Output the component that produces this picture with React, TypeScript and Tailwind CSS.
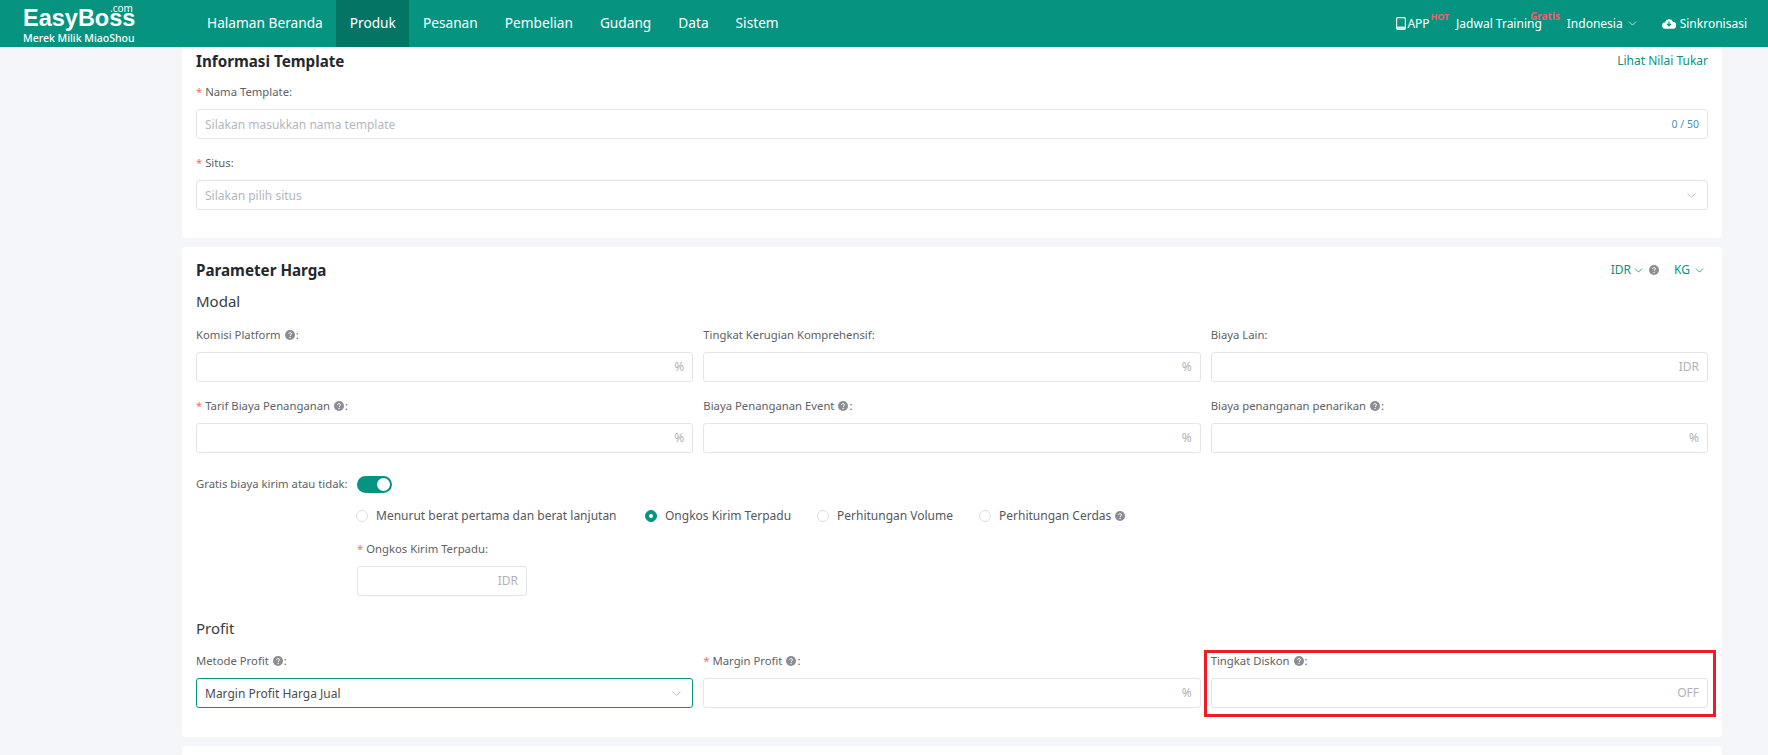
import { ChevronDown } from 'lucide-react'

const font = "font-['Noto_Sans',sans-serif]"

const nav = ['Halaman Beranda', 'Produk', 'Pesanan', 'Pembelian', 'Gudang', 'Data', 'Sistem']

function Help() {
  return (
    <svg viewBox="0 0 12 12" className="inline-block w-[10px] h-[10px] ml-[4px] mr-[1px] align-[-1px]">
      <circle cx="6" cy="6" r="6" fill="#8a8d93" />
      <path d="M4.3 4.7c0-1 .8-1.6 1.8-1.6s1.7.6 1.7 1.5c0 1.3-1.7 1.3-1.7 2.6" fill="none" stroke="#fff" strokeWidth="1.2" />
      <circle cx="6.1" cy="9" r=".8" fill="#fff" />
    </svg>
  )
}

function CloudIcon() {
  return (
    <svg viewBox="0 0 16 12" className="w-[14px] h-[11px] mr-[4px]">
      <path d="M4 12a3.6 3.6 0 0 1-.6-7.2A4.8 4.8 0 0 1 12.4 4 4 4 0 0 1 12.2 12z" fill="#fff" />
      <path d="M8 3.6v4.6M5.8 6.4 8 8.6l2.2-2.2" fill="none" stroke="#06937f" strokeWidth="1.4" />
    </svg>
  )
}

function PhoneIcon() {
  return (
    <svg viewBox="0 0 10 13" className="w-[10px] h-[13px] mr-[1px]">
      <rect x=".6" y=".6" width="8.8" height="11.8" rx="1.4" fill="none" stroke="#fff" strokeWidth="1.1" />
      <path d="M.6 9.6h8.8v1.6a1.2 1.2 0 0 1-1.2 1.2H1.8a1.2 1.2 0 0 1-1.2-1.2z" fill="#cfeee8" />
    </svg>
  )
}

function Label({ text, required, help }: { text: string; required?: boolean; help?: boolean }) {
  return (
    <div className="h-[18px] leading-[18px] text-[11.3px] text-[#606266] whitespace-nowrap">
      {required && <span className="text-[#f56c6c]">* </span>}
      {text}
      {help && <Help />}:
    </div>
  )
}

function Input({ placeholder, suffix, value, focused, chevron, className }: {
  placeholder?: string
  suffix?: string
  value?: string
  focused?: boolean
  chevron?: boolean
  className?: string
}) {
  return (
    <div
      className={`h-[30px] bg-white rounded-[3px] border flex items-center justify-between pl-[8px] pr-[8px] text-[12px] ${
        focused ? 'border-[#06937f]' : 'border-[#e3e5ea]'
      } ${className ?? ''}`}
    >
      <span className={`pt-[1px] ${value ? 'text-[#4a4d52]' : 'text-[#b4b7bd]'}`}>{value ?? placeholder}</span>
      {suffix && <span className={suffix === '0 / 50' ? 'pt-[1px] text-[10.5px] text-[#4a8fb5]' : 'text-[#b0b3b9]'}>{suffix}</span>}
      {chevron && <ChevronDown size={15} strokeWidth={1.3} className="text-[#a9acb2]" />}
    </div>
  )
}

function Field({ text, required, help, ...rest }: {
  text: string
  required?: boolean
  help?: boolean
  placeholder?: string
  suffix?: string
  value?: string
  focused?: boolean
  chevron?: boolean
}) {
  return (
    <div>
      <Label text={text} required={required} help={help} />
      <Input className="mt-[8px]" {...rest} />
    </div>
  )
}

function Radio({ text, on, help, className }: { text: string; on?: boolean; help?: boolean; className: string }) {
  return (
    <div className={`flex items-center text-[12px] text-[#55585e] whitespace-nowrap ${className}`}>
      <span
        className={`w-[12px] h-[12px] rounded-full mr-[8px] flex items-center justify-center border ${
          on ? 'bg-[#06937f] border-[#06937f]' : 'bg-white border-[#dcdfe6]'
        }`}
      >
        {on && <span className="w-[4px] h-[4px] rounded-full bg-white" />}
      </span>
      {text}
      {help && <Help />}
    </div>
  )
}

export default function App() {
  return (
    <div className={`${font} relative h-[755px] overflow-hidden bg-[#f5f6fa]`}>
      <header className="h-[47px] bg-[#06937f] flex items-stretch text-white">
        <div className="w-[193.5px] pl-[23px] relative shrink-0">
          <div className="font-['Liberation_Sans',sans-serif] font-bold text-[23.5px] leading-[25px] pt-[6px]">EasyBoss</div>
          <span className="absolute left-[110px] top-[2px] text-[10px] leading-[12px]">.com</span>
          <div className="text-[10.5px] leading-[12px] mt-[1px] font-medium">Merek Milik MiaoShou</div>
        </div>
        <nav className="flex text-[13.7px]">
          {nav.map((n) => (
            <div key={n} className={`px-[13.5px] flex items-center ${n === 'Produk' ? 'bg-[#047565]' : ''}`}>
              {n}
            </div>
          ))}
        </nav>
        <div className="ml-auto flex items-center text-[12px] pr-[21px]">
          <div className="relative flex items-center mr-[26.5px]">
            <PhoneIcon />
            APP
            <span className="absolute left-[34px] -top-[5px] text-[9px] font-bold text-[#e8626a]">HOT</span>
          </div>
          <div className="relative mr-[25px]">
            Jadwal Training
            <span className="absolute left-[74px] -top-[6px] text-[10px] font-bold text-[#e8626a]">Gratis</span>
          </div>
          <div className="flex items-center mr-[23px]">
            Indonesia
            <ChevronDown size={13} strokeWidth={1.3} className="ml-[3px]" />
          </div>
          <div className="flex items-center">
            <CloudIcon />
            Sinkronisasi
          </div>
        </div>
      </header>

      <main className="pl-[182px] w-[1722px]">
        <section className="bg-white px-[14px] pt-[5px] pb-[28px] rounded-b-[4px]">
          <div className="flex justify-between items-center h-[18px]">
            <h2 className="text-[15.2px] font-bold text-[#25282d]">Informasi Template</h2>
            <a className="text-[12px] text-[#06937f]">Lihat Nilai Tukar</a>
          </div>
          <div className="mt-[13px]">
            <Field text="Nama Template" required placeholder="Silakan masukkan nama template" suffix="0 / 50" />
          </div>
          <div className="mt-[15px]">
            <Field text="Situs" required placeholder="Silakan pilih situs" chevron />
          </div>
        </section>

        <section className="mt-[9px] bg-white px-[14px] pt-[14px] pb-[29px] rounded-[4px]">
          <div className="flex justify-between items-center h-[18px]">
            <h2 className="text-[15.2px] font-bold text-[#25282d]">Parameter Harga</h2>
            <div className="flex items-center text-[12px] text-[#06937f] pr-[2px]">
              IDR
              <ChevronDown size={13} strokeWidth={1.5} className="ml-[1px]" />
              <Help />
              <span className="ml-[14px]">KG</span>
              <ChevronDown size={13} strokeWidth={1.5} className="ml-[3px]" />
            </div>
          </div>
          <h3 className="mt-[10px] h-[24px] leading-[24px] text-[15px] text-[#3a3d42]">Modal</h3>
          <div className="mt-[13px] grid grid-cols-3 gap-x-[10px] gap-y-[15px]">
            <Field text="Komisi Platform" help suffix="%" />
            <Field text="Tingkat Kerugian Komprehensif" suffix="%" />
            <Field text="Biaya Lain" suffix="IDR" />
            <Field text="Tarif Biaya Penanganan" required help suffix="%" />
            <Field text="Biaya Penanganan Event" help suffix="%" />
            <Field text="Biaya penanganan penarikan" help suffix="%" />
          </div>

          <div className="mt-[23px] h-[17px] flex items-center">
            <span className="w-[161px] text-[11.3px] text-[#606266] whitespace-nowrap">Gratis biaya kirim atau tidak:</span>
            <span className="w-[35px] h-[17px] rounded-full bg-[#06937f] flex justify-end items-center pr-[2px]">
              <span className="w-[13px] h-[13px] rounded-full bg-white" />
            </span>
          </div>
          <div className="mt-[14px] h-[18px] ml-[160px] flex items-center">
            <Radio text="Menurut berat pertama dan berat lanjutan" className="w-[289px]" />
            <Radio text="Ongkos Kirim Terpadu" on className="w-[172px]" />
            <Radio text="Perhitungan Volume" className="w-[162px]" />
            <Radio text="Perhitungan Cerdas" help className="" />
          </div>
          <div className="mt-[15px] ml-[161px] w-[170px]">
            <Field text="Ongkos Kirim Terpadu" required suffix="IDR" />
          </div>

          <h3 className="mt-[20px] h-[24px] leading-[24px] text-[15px] text-[#3a3d42]">Profit</h3>
          <div className="mt-[12px] grid grid-cols-3 gap-x-[10px]">
            <Field text="Metode Profit" help value="Margin Profit Harga Jual" focused chevron />
            <Field text="Margin Profit" required help suffix="%" />
            <Field text="Tingkat Diskon" help suffix="OFF" />
          </div>
        </section>

        <section className="mt-[9px] h-[40px] bg-white rounded-t-[4px]" />
      </main>

      <div className="absolute left-[1204px] top-[650px] w-[512px] h-[67px] border-[3px] border-[#ee1c25]" />
    </div>
  )
}
